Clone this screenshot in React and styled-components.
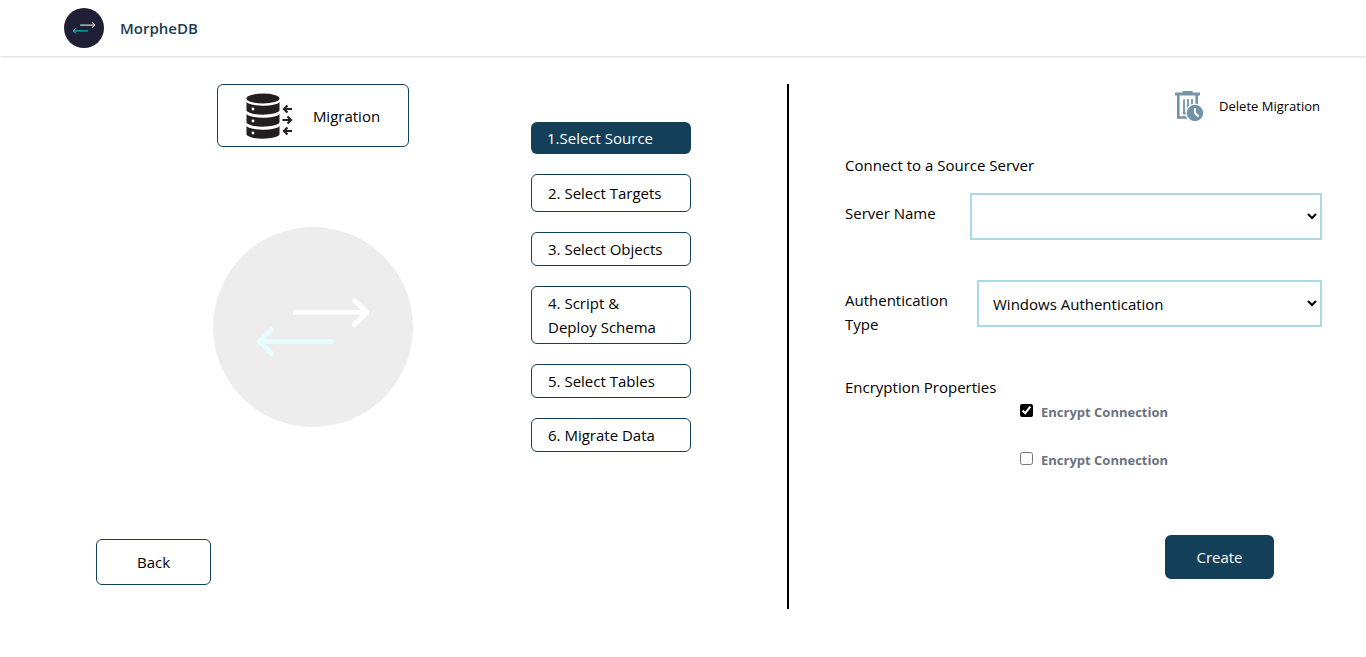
import React from "react";
import styled, { createGlobalStyle } from "styled-components";

const navy = "#134058";

const GlobalStyle = createGlobalStyle`
  *, *::before, *::after { box-sizing: border-box; }
  body {
    margin: 0;
    background: #fff;
    color: #000;
    font-family: "Segoe UI", "Open Sans", "Noto Sans", sans-serif;
    font-size: 15px;
    line-height: 24px;
  }
  button, select, input { font: inherit; color: inherit; }
`;

const Header = styled.header`
  display: flex;
  align-items: center;
  gap: 16px;
  height: 56px;
  padding: 0 64px;
  box-shadow: 0 1px 2px rgba(0, 0, 0, 0.15);
`;

const Brand = styled.span`
  color: #1b3c55;
  font-weight: 600;
`;

const Main = styled.main`
  display: grid;
  grid-template-columns: 435fr 256fr 2px 533fr;
  padding: 28px 44px 28px 96px;
`;

const Overview = styled.section`
  display: flex;
  flex-direction: column;
  align-items: center;
  padding: 0 1px 24px 0;
`;

const OutlineButton = styled.button`
  display: flex;
  align-items: center;
  justify-content: center;
  background: #fff;
  border: 1px solid ${navy};
  border-radius: 6px;
  cursor: pointer;
`;

const MigrationButton = styled(OutlineButton)`
  gap: 20px;
  width: 192px;
  height: 63px;
  margin-bottom: 80px;
`;

const BackButton = styled(OutlineButton)`
  align-self: flex-start;
  width: 115px;
  height: 46px;
  margin-top: 112px;
`;

const Steps = styled.nav`
  display: flex;
  flex-direction: column;
  align-items: flex-start;
  gap: 20px;
  padding-top: 38px;
`;

const Step = styled.button`
  width: 160px;
  padding: ${(p) => (p.$roomy ? "6px" : "4px")} 16px;
  text-align: left;
  border: ${(p) => (p.$active ? "0" : `1px solid ${navy}`)};
  border-radius: 6px;
  background: ${(p) => (p.$active ? navy : "#fff")};
  color: ${(p) => (p.$active ? "#fff" : "#000")};
  cursor: pointer;
`;

const Divider = styled.div`
  background: #000;
`;

const Form = styled.form`
  display: flex;
  flex-direction: column;
  padding-left: 56px;
`;

const DeleteButton = styled.button`
  display: flex;
  align-items: center;
  align-self: flex-end;
  gap: 15px;
  margin-top: 6px;
  padding: 0 2px 0 0;
  border: 0;
  background: none;
  font-size: 13px;
  line-height: 32px;
  cursor: pointer;
`;

const Heading = styled.h2`
  margin: ${(p) => p.$top} 0 0;
  font-size: 15px;
  font-weight: 400;
`;

const Field = styled.div`
  display: grid;
  grid-template-columns: ${(p) => p.$label} 1fr;
  align-items: start;
  margin-top: ${(p) => p.$top};
`;

const FieldLabel = styled.label`
  padding: 8px 24px 0 0;
`;

const Select = styled.select`
  width: 100%;
  height: 47px;
  padding: 0 11px 0 10px;
  border: 2px solid #add8e6;
  border-radius: 0;
  background: #fff;
`;

const Options = styled.div`
  display: flex;
  flex-direction: column;
  gap: 24px;
  margin-top: 1px;
  padding-left: 175px;
`;

const Option = styled.label`
  display: flex;
  align-items: center;
  gap: 8px;
  color: #6b7280;
  font-size: 13px;
  font-weight: 700;
`;

const Checkbox = styled.input`
  width: 13px;
  height: 13px;
  margin: 0 0 3px;
  accent-color: #000;
`;

const CreateButton = styled.button`
  align-self: flex-end;
  width: 109px;
  height: 44px;
  margin: 63px 48px 0 0;
  border: 0;
  border-radius: 6px;
  background: ${navy};
  color: #fff;
  cursor: pointer;
`;

function SwapMark({ size, disc, right, left }) {
  return (
    <svg width={size} height={size} viewBox="0 0 200 200" fill="none" strokeWidth="5" strokeLinecap="round" strokeLinejoin="round" aria-hidden="true">
      <circle cx="100" cy="100" r="100" fill={disc} />
      <path d="M82.500 85.500H153.500M141.500 73.500L154 85.500L141.500 97.500" stroke={right} />
      <path d="M118 114.500H47M58.500 102.500L46.500 114.500L58.500 126.500" stroke={left} />
    </svg>
  );
}

function DatabaseIcon() {
  return (
    <svg width="47" height="46" viewBox="0 0 47 46" aria-hidden="true">
      <g fill="#231f20">
        <ellipse cx="17" cy="5.500" rx="16.500" ry="5" />
        <path d="M.5 9c4 5 29 5 33 0v8.500c-3 5.500-30 5.500-33 0z" />
        <path d="M.5 21c4 5 29 5 33 0v8.500c-3 5.500-30 5.500-33 0z" />
        <path d="M.5 33c4 5 29 5 33 0v8.500c-3 5.500-30 5.500-33 0z" />
      </g>
      <g fill="#fff">
        <circle cx="7" cy="16" r="1.400" />
        <circle cx="7" cy="28" r="1.400" />
        <circle cx="7" cy="40" r="1.400" />
      </g>
      <path d="M46 16h-8M41.500 12.500L38 16l3.500 3.500M36.500 27h8M41.500 23.500L45 27l-3.500 3.500M46 38h-8M41.500 34.500L38 38l3.500 3.500" fill="none" stroke="#231f20" strokeWidth="2.200" />
    </svg>
  );
}

function TrashClockIcon() {
  return (
    <svg width="29" height="32" viewBox="0 0 29 32" fill="none" stroke="#7393a7" aria-hidden="true">
      <path d="M0 4h25" strokeWidth="3" />
      <path d="M7.500 2h10" strokeWidth="2" />
      <path d="M3.300 5v22.500h9M21.700 5v12" strokeWidth="2.600" />
      <path d="M9 9.500v14h2M13 9v10M17 9v8" strokeWidth="1.800" />
      <circle cx="20" cy="23" r="8.800" fill="#7393a7" stroke="#fff" strokeWidth="1.200" />
      <path d="M20 18v5l3.500 3.500" stroke="#fff" strokeWidth="2" />
    </svg>
  );
}

const steps = [
  { text: "1.Select Source", active: true },
  { text: "2. Select Targets", roomy: true },
  { text: "3. Select Objects" },
  { text: "4. Script & Deploy\u00a0Schema" },
  { text: "5. Select Tables" },
  { text: "6. Migrate Data" },
];

export default function App() {
  return (
    <>
      <GlobalStyle />
      <Header>
        <SwapMark size={40} disc="#1f1f35" right="#fff" left="#00dede" />
        <Brand>MorpheDB</Brand>
      </Header>
      <Main>
        <Overview>
          <MigrationButton type="button">
            <DatabaseIcon />
            Migration
          </MigrationButton>
          <SwapMark size={200} disc="#ededed" right="#fff" left="#e6fdfd" />
          <BackButton type="button">Back</BackButton>
        </Overview>
        <Steps aria-label="Migration steps">
          {steps.map((s) => (
            <Step key={s.text} type="button" $active={s.active} $roomy={s.roomy}>
              {s.text}
            </Step>
          ))}
        </Steps>
        <Divider />
        <Form onSubmit={(e) => e.preventDefault()}>
          <DeleteButton type="button">
            <TrashClockIcon />
            Delete Migration
          </DeleteButton>
          <Heading $top="31px">Connect to a Source Server</Heading>
          <Field $label="125px" $top="16px">
            <FieldLabel htmlFor="server">Server Name</FieldLabel>
            <Select id="server" defaultValue="">
              <option value=""></option>
            </Select>
          </Field>
          <Field $label="132px" $top="40px">
            <FieldLabel htmlFor="auth">Authentication Type</FieldLabel>
            <Select id="auth" defaultValue="windows">
              <option value="windows">Windows Authentication</option>
            </Select>
          </Field>
          <Heading $top="39px">Encryption Properties</Heading>
          <Options>
            <Option>
              <Checkbox type="checkbox" defaultChecked />
              Encrypt Connection
            </Option>
            <Option>
              <Checkbox type="checkbox" />
              Encrypt Connection
            </Option>
          </Options>
          <CreateButton type="submit">Create</CreateButton>
        </Form>
      </Main>
    </>
  );
}
